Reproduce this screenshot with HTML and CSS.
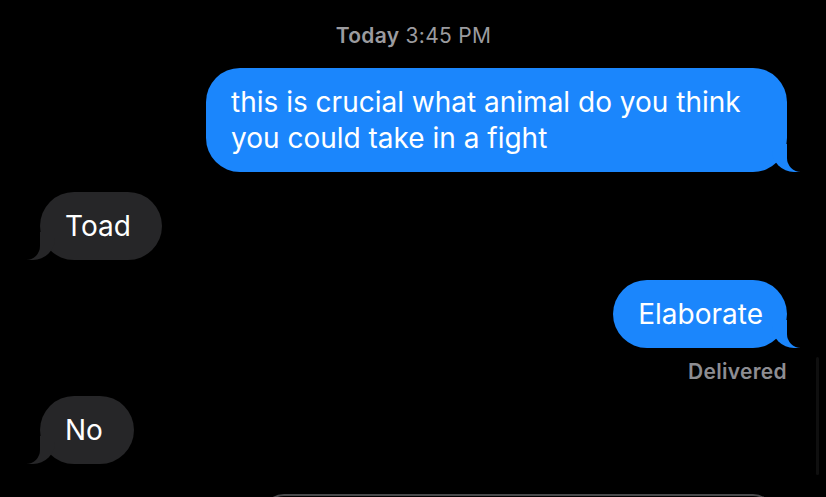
FILE: index.html
```html
<!DOCTYPE html>
<html lang="en">
<head>
    <meta charset="UTF-8">
    <meta name="viewport" content="width=device-width, initial-scale=1.0">
    <title>Messages</title>
    <link rel="stylesheet" href="styles.css">
</head>
<body>
    <div class="thread">
        <div class="stamp"><b>Today</b> 3:45 PM</div>

        <div class="row out">
            <div class="bubble sent">this is crucial what animal do you think you could take in a fight</div>
        </div>

        <div class="row in">
            <div class="bubble got">Toad</div>
        </div>

        <div class="row out">
            <div class="bubble sent">Elaborate</div>
        </div>
        <div class="status">Delivered</div>

        <div class="row in">
            <div class="bubble got">No</div>
        </div>

        <div class="compose"></div>
    </div>
    <div class="scroller"></div>
</body>
</html>
```

FILE: styles.css
```css
html, body {
    margin: 0;
    height: 100%;
    overflow: hidden;
    background: #000;
}
body {
    font-family: Inter, 'Noto Sans', sans-serif;
    color: #fff;
    position: relative;
}
.thread {
    display: flex;
    flex-direction: column;
    padding: 24px 39px 0 40px;
}
.stamp {
    text-align: center;
    font-size: 21px;
    letter-spacing: 0.3px;
    line-height: 24px;
    color: #9b9b9f;
    margin-bottom: 20px;
}
.stamp b {font-weight: 600;}
.row {display: flex; margin-bottom: 20px;}
.row.out {justify-content: flex-end;}
.row.in {justify-content: flex-start;}
.bubble {
    position: relative;
    max-width: 532px;
    padding: 16px 25px;
    font-size: 28px;
    line-height: 36px;
    border-radius: 34px;
}
.sent {background: #1b86fc; padding-right: 24px;}
.got {background: #262628; padding-right: 31px;}

/* tails */
.bubble::before, .bubble::after {
    content: "";
    position: absolute;
    bottom: 0;
    height: 28px;
}
.sent::before {
    right: -13px;
    width: 28px;
    background: #1b86fc;
    border-bottom-left-radius: 22px;
}
.sent::after {
    right: -15px;
    width: 15px;
    background: #000;
    border-bottom-left-radius: 14px;
}
.got::before {
    left: -13px;
    width: 28px;
    background: #262628;
    border-bottom-right-radius: 22px;
}
.got::after {
    left: -15px;
    width: 15px;
    background: #000;
    border-bottom-right-radius: 14px;
}

.status {
    align-self: flex-end;
    font-size: 21px;
    font-weight: 600;
    letter-spacing: 0.3px;
    line-height: 26px;
    color: #8d8d92;
    margin: -9px 0 11px;
}
.compose {
    align-self: flex-start;
    width: 509px;
    height: 60px;
    margin: 10px 0 0 222px;
    border: 2px solid #4a4a4c;
    border-radius: 22px;
}
.scroller {
    position: absolute;
    right: 7px;
    top: 357px;
    width: 3px;
    height: 118px;
    border-radius: 2px;
    background: #0f0f0f;
}
```
